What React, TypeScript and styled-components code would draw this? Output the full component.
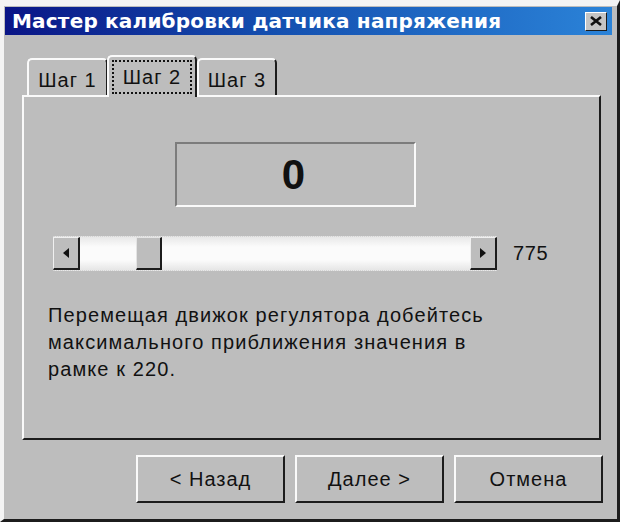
import React from "react";
import styled, { createGlobalStyle } from "styled-components";

const GlobalStyle = createGlobalStyle`
  html, body { margin: 0; padding: 0; background: #f4f4f4; }
  body { font-family: "Liberation Sans", Arial, sans-serif; color: #111; }
`;

const Window = styled.div`
  box-sizing: border-box;
  width: 620px;
  height: 522px;
  display: flex;
  flex-direction: column;
  background: #bdbdbd;
  border-style: solid;
  border-width: 6px 3px 3px 4px;
  border-color: #f4f4f4 #1c1c1c #1c1c1c #f4f4f4;
  padding: 1px 5px 0 1px;
`;

const TitleBar = styled.div`
  height: 28px;
  display: flex;
  align-items: center;
  justify-content: space-between;
  padding: 0 5px 0 7px;
  background: linear-gradient(90deg, #0a1586 0%, #1450b0 45%, #2b83d8 100%);
`;

const Title = styled.span`
  color: #fff;
  font-family: "DejaVu Sans", Verdana, sans-serif;
  font-weight: bold;
  font-size: 20px;
  letter-spacing: 0.2px;
`;

const CloseButton = styled.button`
  box-sizing: border-box;
  width: 22px;
  height: 19px;
  padding: 0;
  display: flex;
  align-items: center;
  justify-content: center;
  background: #c4c4c4;
  border: 1px solid;
  border-color: #fff #1c1c1c #1c1c1c #fff;
`;

const Body = styled.div`
  flex: 1;
  display: flex;
  flex-direction: column;
  padding: 20px 11px 0 17px;
`;

const TabRow = styled.div`
  display: flex;
  align-items: flex-end;
  height: 42px;
  padding-left: 5px;
  margin-bottom: -2px;
`;

const Tab = styled.div<{ $active?: boolean; $width: number }>`
  box-sizing: border-box;
  width: ${(p) => p.$width}px;
  height: ${(p) => (p.$active ? 42 : 37)}px;
  margin-bottom: ${(p) => (p.$active ? 0 : 2)}px;
  margin-left: ${(p) => (p.$active ? -1 : 0)}px;
  position: relative;
  z-index: ${(p) => (p.$active ? 1 : 0)};
  display: flex;
  align-items: flex-start;
  justify-content: center;
  padding-top: ${(p) => (p.$active ? 3 : 5)}px;
  background: #bdbdbd;
  border-style: solid;
  border-width: 2px 2px 0 2px;
  border-color: #fafafa #1c1c1c #bdbdbd #fafafa;
  border-radius: 5px 5px 0 0;
  font-size: 20px;
  letter-spacing: 1px;
`;

const TabLabel = styled.span<{ $focused?: boolean }>`
  box-sizing: border-box;
  display: flex;
  align-items: center;
  justify-content: center;
  width: ${(p) => (p.$focused ? "80px" : "auto")};
  height: ${(p) => (p.$focused ? "34px" : "30px")};
  border: 2px dotted ${(p) => (p.$focused ? "#111" : "transparent")};
`;

const Panel = styled.div`
  box-sizing: border-box;
  width: 579px;
  height: 345px;
  display: flex;
  flex-direction: column;
  padding: 45px 0 0 24px;
  border-style: solid;
  border-width: 2px;
  border-color: #fafafa #1c1c1c #1c1c1c #fafafa;
`;

const ValueBox = styled.div`
  box-sizing: border-box;
  width: 241px;
  height: 65px;
  margin-left: 127px;
  display: flex;
  align-items: center;
  justify-content: center;
  padding-right: 4px;
  border-style: solid;
  border-width: 2px;
  border-color: #7c7c7c #fafafa #fafafa #7c7c7c;
  font-size: 42px;
  font-weight: bold;
`;

const SliderRow = styled.div`
  display: flex;
  align-items: center;
  gap: 16px;
  margin: 29px 0 0 5px;
  font-size: 20px;
  letter-spacing: 0.6px;
`;

const ScrollBar = styled.div`
  box-sizing: border-box;
  width: 444px;
  height: 35px;
  display: flex;
  border-top: 1px dotted #d4d4d4;
  border-bottom: 1px dotted #d4d4d4;
  background: linear-gradient(180deg, #e8e8e8 0%, #fbfbfb 30%, #fbfbfb 70%, #e6e6e6 100%);
`;

const ArrowButton = styled.div`
  box-sizing: border-box;
  width: 27px;
  height: 100%;
  display: flex;
  align-items: center;
  justify-content: center;
  background: #bdbdbd;
  border-style: solid;
  border-width: 1px 2px 2px 1px;
  border-color: #f0f0f0 #1c1c1c #1c1c1c #f0f0f0;
`;

const Track = styled.div`
  flex: 1;
  display: flex;
`;

const Thumb = styled.div<{ $offset: number }>`
  box-sizing: border-box;
  width: 26px;
  height: 100%;
  margin-left: ${(p) => p.$offset}px;
  background: #bdbdbd;
  border-style: solid;
  border-width: 1px 2px 2px 1px;
  border-color: #e4e4e4 #1c1c1c #1c1c1c #e4e4e4;
`;

const Hint = styled.p`
  margin: 31px 0 0 0;
  font-size: 20px;
  line-height: 27px;
  letter-spacing: 1.1px;
`;

const ButtonRow = styled.div`
  display: flex;
  justify-content: flex-end;
  gap: 10px;
  margin: 15px -2px 0 0;
`;

const DialogButton = styled.button`
  box-sizing: border-box;
  width: 149px;
  height: 48px;
  padding: 0;
  background: #bdbdbd;
  border-style: solid;
  border-width: 2px;
  border-color: #fafafa #1c1c1c #1c1c1c #fafafa;
  font-family: "Liberation Sans", Arial, sans-serif;
  font-size: 20px;
  letter-spacing: 1px;
  color: #111;
`;

const Arrow = ({ dir }: { dir: "left" | "right" }) => (
  <svg width="6" height="10" viewBox="0 0 6 10">
    <path d={dir === "left" ? "M6 0 L0 5 L6 10 Z" : "M0 0 L6 5 L0 10 Z"} fill="#111" />
  </svg>
);

export default function App() {
  return (
    <>
      <GlobalStyle />
      <Window>
        <TitleBar>
          <Title>Мастер калибровки датчика напряжения</Title>
          <CloseButton aria-label="close">
            <svg width="12" height="10" viewBox="0 0 12 10">
              <path d="M1 1 L11 9 M11 1 L1 9" stroke="#111" strokeWidth="2.6" />
            </svg>
          </CloseButton>
        </TitleBar>
        <Body>
          <TabRow>
            <Tab $width={81}>
              <TabLabel>Шаг 1</TabLabel>
            </Tab>
            <Tab $width={90} $active>
              <TabLabel $focused>Шаг 2</TabLabel>
            </Tab>
            <Tab $width={80}>
              <TabLabel>Шаг 3</TabLabel>
            </Tab>
          </TabRow>
          <Panel>
            <ValueBox>0</ValueBox>
            <SliderRow>
              <ScrollBar>
                <ArrowButton>
                  <Arrow dir="left" />
                </ArrowButton>
                <Track>
                  <Thumb $offset={56} />
                </Track>
                <ArrowButton>
                  <Arrow dir="right" />
                </ArrowButton>
              </ScrollBar>
              <span>775</span>
            </SliderRow>
            <Hint>
              Перемещая движок регулятора добейтесь
              <br />
              максимального приближения значения в
              <br />
              рамке к 220.
            </Hint>
          </Panel>
          <ButtonRow>
            <DialogButton>&lt; Назад</DialogButton>
            <DialogButton>Далее &gt;</DialogButton>
            <DialogButton>Отмена</DialogButton>
          </ButtonRow>
        </Body>
      </Window>
    </>
  );
}
